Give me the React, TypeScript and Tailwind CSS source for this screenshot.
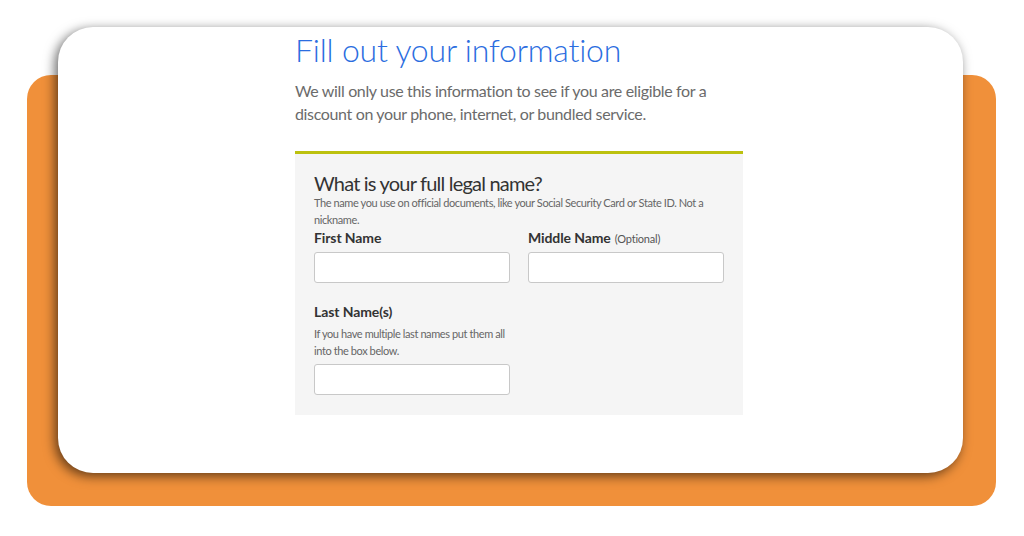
import React from "react";

const font = { fontFamily: "Lato, 'Open Sans', sans-serif" };

function Field({ label, optional }: { label: string; optional?: boolean }) {
  return (
    <div className="flex flex-col w-[196px]">
      <div className="text-[14px] font-bold text-[#333333] leading-[18px] h-[18px] tracking-[-0.1px]">
        {label}
        {optional && <span className="text-[11px] font-normal text-[#555555] ml-1 tracking-[-0.2px]">(Optional)</span>}
      </div>
      <div className="mt-[5px] h-[31px] bg-white border border-[#c8c8c8] rounded-[3px]" />
    </div>
  );
}

export default function App() {
  return (
    <div className="w-[1024px] h-[536px] bg-white overflow-hidden pt-[75px] pl-[27px]" style={font}>
      <div className="w-[969px] h-[431px] bg-[#f0903a] rounded-[24px] flex flex-col">
        <div className="mt-[-48px] ml-[31px] w-[905px] h-[446px] bg-white rounded-[35px] shadow-[-3px_3px_12px_rgba(0,0,0,0.6)] pl-[237px] pt-[4px]">
          <div className="w-[448px]">
            <h1 className="text-[32px] font-light text-[#2b6de0] leading-[38px] tracking-[-0.2px]">
              Fill out your information
            </h1>
            <p className="mt-[10px] text-[16px] text-[#6b6b6b] leading-[23px] tracking-[-0.35px] w-[440px]">
              We will only use this information to see if you are eligible for a discount on your phone, internet, or bundled service.
            </p>
            <div className="mt-[26px] border-t-[3px] border-[#bcc10f] bg-[#f5f5f5] px-[19px] pt-[18px] pb-[20px]">
              <div className="text-[20px] text-[#333333] leading-[22px] tracking-[-0.8px]">What is your full legal name?</div>
              <div className="text-[11px] text-[#666666] leading-[17px] tracking-[-0.4px] w-[400px]">
                The name you use on official documents, like your Social Security Card or State ID. Not a nickname.
              </div>
              <div className="flex gap-[18px] mt-[1px]">
                <Field label="First Name" />
                <Field label="Middle Name" optional />
              </div>
              <div className="mt-[20px] text-[14px] font-bold text-[#333333] leading-[18px] tracking-[-0.1px]">Last Name(s)</div>
              <div className="mt-[4px] text-[11px] text-[#666666] leading-[17px] tracking-[-0.4px] w-[200px]">
                If you have multiple last names put them all into the box below.
              </div>
              <div className="mt-[5px] w-[196px] h-[31px] bg-white border border-[#c8c8c8] rounded-[3px]" />
            </div>
          </div>
        </div>
      </div>
    </div>
  );
}
